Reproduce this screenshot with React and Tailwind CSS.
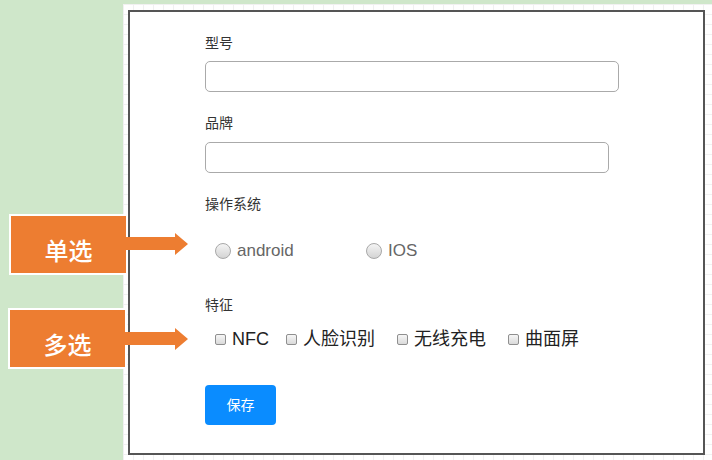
const Radio = ({ label, className = '' }) => (
  <label className={`flex items-center ${className}`}>
    <span className="w-4 h-4 rounded-full border border-[#a8a8a8] bg-gradient-to-b from-[#f4f4f4] to-[#d4d4d4]" />
    <span className="ml-[6px] text-[17px] text-[#666] font-['Liberation_Sans',sans-serif]">{label}</span>
  </label>
);

const Check = ({ label, className = '' }) => (
  <label className={`flex items-center ${className}`}>
    <span className="w-[11px] h-[11px] rounded-[2px] border border-[#8f8f8f] bg-gradient-to-b from-[#f6f6f6] to-[#dadada]" />
    <span className="ml-[6px] text-[18px] text-[#222]">{label}</span>
  </label>
);

const Arrow = ({ className }) => (
  <svg className={`absolute ${className}`} width="64" height="22" viewBox="0 0 64 22">
    <polygon points="0,4 50,4 50,0 63,11 50,22 50,17 0,17" fill="#ed7d31" />
  </svg>
);

const Callout = ({ text, className }) => (
  <div
    className={`absolute w-[119px] h-[61px] border-2 border-white bg-[#ed7d31] flex justify-center pt-[24px] text-white text-[24px] leading-[24px] font-medium ${className}`}
  >
    {text}
  </div>
);

export default function App() {
  return (
    <div className="relative w-[712px] h-[460px] overflow-hidden bg-[#cfe7ca] pl-[123px] pt-[4px] flex font-['Liberation_Sans','Noto_Sans_CJK_SC',sans-serif]">
      <div className="flex-1 bg-white bg-[linear-gradient(to_right,#f1f1f1_1px,transparent_1px),linear-gradient(to_bottom,#f1f1f1_1px,transparent_1px)] bg-size-[10px_10px] pl-[5px] pt-[6px]">
        <div className="w-[577px] h-[445px] border-2 border-[#555] bg-white pl-[75px] pt-[21px]">
          <div className="text-[14px] leading-[20px] text-[#333]">型号</div>
          <input className="mt-[8px] block w-[414px] h-[31px] rounded-[5px] border border-[#aaa] outline-none" />

          <div className="mt-[21px] text-[14px] leading-[20px] text-[#333]">品牌</div>
          <input className="mt-[9px] block w-[404px] h-[31px] rounded-[5px] border border-[#aaa] outline-none" />

          <div className="mt-[21px] text-[14px] leading-[20px] text-[#333]">操作系统</div>
          <div className="mt-[27px] flex items-center h-[20px] pl-[10px]">
            <Radio label="android" className="w-[151px]" />
            <Radio label="IOS" />
          </div>

          <div className="mt-[34px] text-[14px] leading-[20px] text-[#333]">特征</div>
          <div className="mt-[13px] flex items-center h-[22px] pl-[10px]">
            <Check label="NFC" />
            <Check label="人脸识别" className="ml-[17px]" />
            <Check label="无线充电" className="ml-[22px]" />
            <Check label="曲面屏" className="ml-[22px]" />
          </div>

          <button className="mt-[35px] w-[71px] h-[40px] rounded-[4px] bg-[#0a8cff] text-white text-[14px]">
            保存
          </button>
        </div>
      </div>

      <Callout text="单选" className="left-[9px] top-[214px]" />
      <Arrow className="left-[125px] top-[233px]" />
      <Callout text="多选" className="left-[8px] top-[308px]" />
      <Arrow className="left-[125px] top-[328px]" />
    </div>
  );
}
